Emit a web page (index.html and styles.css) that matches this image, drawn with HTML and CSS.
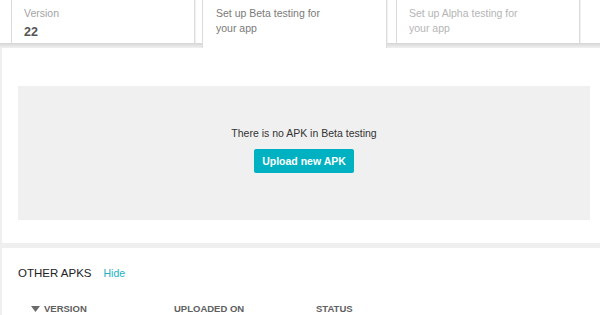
FILE: index.html
```html
<!DOCTYPE html>
<html lang="en">

<head>
  <meta charset="UTF-8" />
  <meta name="viewport" content="width=device-width, initial-scale=1.0" />
  <title>APK</title>
  <link rel="stylesheet" href="styles.css">
</head>

<body>
  <div class="tabs">
    <div class="tab-slot first">
      <div class="tab-card">
        <div class="tab-label">Version</div>
        <div class="tab-value">22</div>
      </div>
    </div>
    <div class="tab-slot active">
      <div class="tab-card">
        <div class="tab-text">Set up Beta testing for<br>your app</div>
      </div>
    </div>
    <div class="tab-slot last">
      <div class="tab-card">
        <div class="tab-text muted">Set up Alpha testing for<br>your app</div>
      </div>
    </div>
  </div>

  <section class="panel beta">
    <div class="empty-box">
      <p class="empty-text">There is no APK in Beta testing</p>
      <button class="upload-btn">Upload new APK</button>
    </div>
  </section>

  <section class="panel other">
    <div class="other-head">
      <h2>OTHER APKS</h2>
      <a href="#" class="hide-link">Hide</a>
    </div>
    <div class="apk-table">
      <div class="th sortable">
        <svg class="sort-icon" width="9" height="6" viewBox="0 0 9 6"><polygon points="0,0 9,0 4.5,6" fill="#6b6b6b" /></svg>
        VERSION
      </div>
      <div class="th">UPLOADED ON</div>
      <div class="th">STATUS</div>
    </div>
  </section>
</body>

</html>
```

FILE: styles.css
```css
* {
  margin: 0;
  padding: 0;
  box-sizing: border-box;
}

body {
  background: #efefef;
  font-family: 'Liberation Sans', Arial, sans-serif;
  color: #333;
}

.tabs {
  display: flex;
  background: #fff;
}

.tab-slot {
  padding-bottom: 5px;
  background: linear-gradient(#d6d6d6, #f0f0f0) bottom / 100% 5px no-repeat;
}

.tab-slot.first {
  padding-left: 11px;
  padding-right: 7px;
}

.tab-slot.last {
  flex: 1;
  padding-left: 9px;
}

.tab-slot.active {
  padding-bottom: 0;
  background: none;
}

.tab-card {
  width: 184px;
  height: 43px;
  padding: 6px 12px 0;
  background: #fff;
  border-left: 1px solid #dcdcdc;
  border-right: 1px solid #dcdcdc;
  box-shadow: 1px 0 0 #f0f0f0;
}

.tab-slot.active .tab-card {
  width: 185px;
  height: 48px;
  padding-left: 13px;
}

.tab-label {
  font-size: 10.5px;
  line-height: 15px;
  color: #a3a3a3;
}

.tab-value {
  margin-top: 4px;
  font-size: 12.5px;
  line-height: 15px;
  font-weight: bold;
  color: #555;
}

.tab-text {
  font-size: 10.5px;
  line-height: 15px;
  color: #7a7a7a;
}

.tab-text.muted {
  color: #b5b5b5;
}

.panel {
  margin-left: 2px;
  background: #fff;
}

.beta {
  padding: 38px 10px 23px 16px;
  margin-bottom: 5px;
}

.empty-box {
  background: #f0f0f0;
  padding: 40px 0 47px;
  display: flex;
  flex-direction: column;
  align-items: center;
}

.empty-text {
  font-size: 10.5px;
  line-height: 14px;
  color: #333;
}

.upload-btn {
  margin-top: 9px;
  height: 24px;
  padding: 0 8px;
  border: none;
  border-radius: 2px;
  background: #00b1c2;
  color: #fff;
  font-family: inherit;
  font-size: 10.5px;
  font-weight: bold;
}

.other {
  padding: 17px 16px 20px;
}

.other-head {
  display: flex;
  align-items: baseline;
  gap: 12px;
  height: 16px;
}

.other-head h2 {
  font-size: 11.5px;
  line-height: 16px;
  font-weight: normal;
  color: #222;
}

.hide-link {
  font-size: 10.5px;
  color: #1bb0c4;
  text-decoration: none;
}

.apk-table {
  display: grid;
  grid-template-columns: 143px 142px 1fr;
  margin: 21px 0 0 13px;
}

.th {
  display: flex;
  align-items: center;
  gap: 4px;
  font-size: 9.5px;
  line-height: 14px;
  font-weight: bold;
  color: #606060;
}
```
